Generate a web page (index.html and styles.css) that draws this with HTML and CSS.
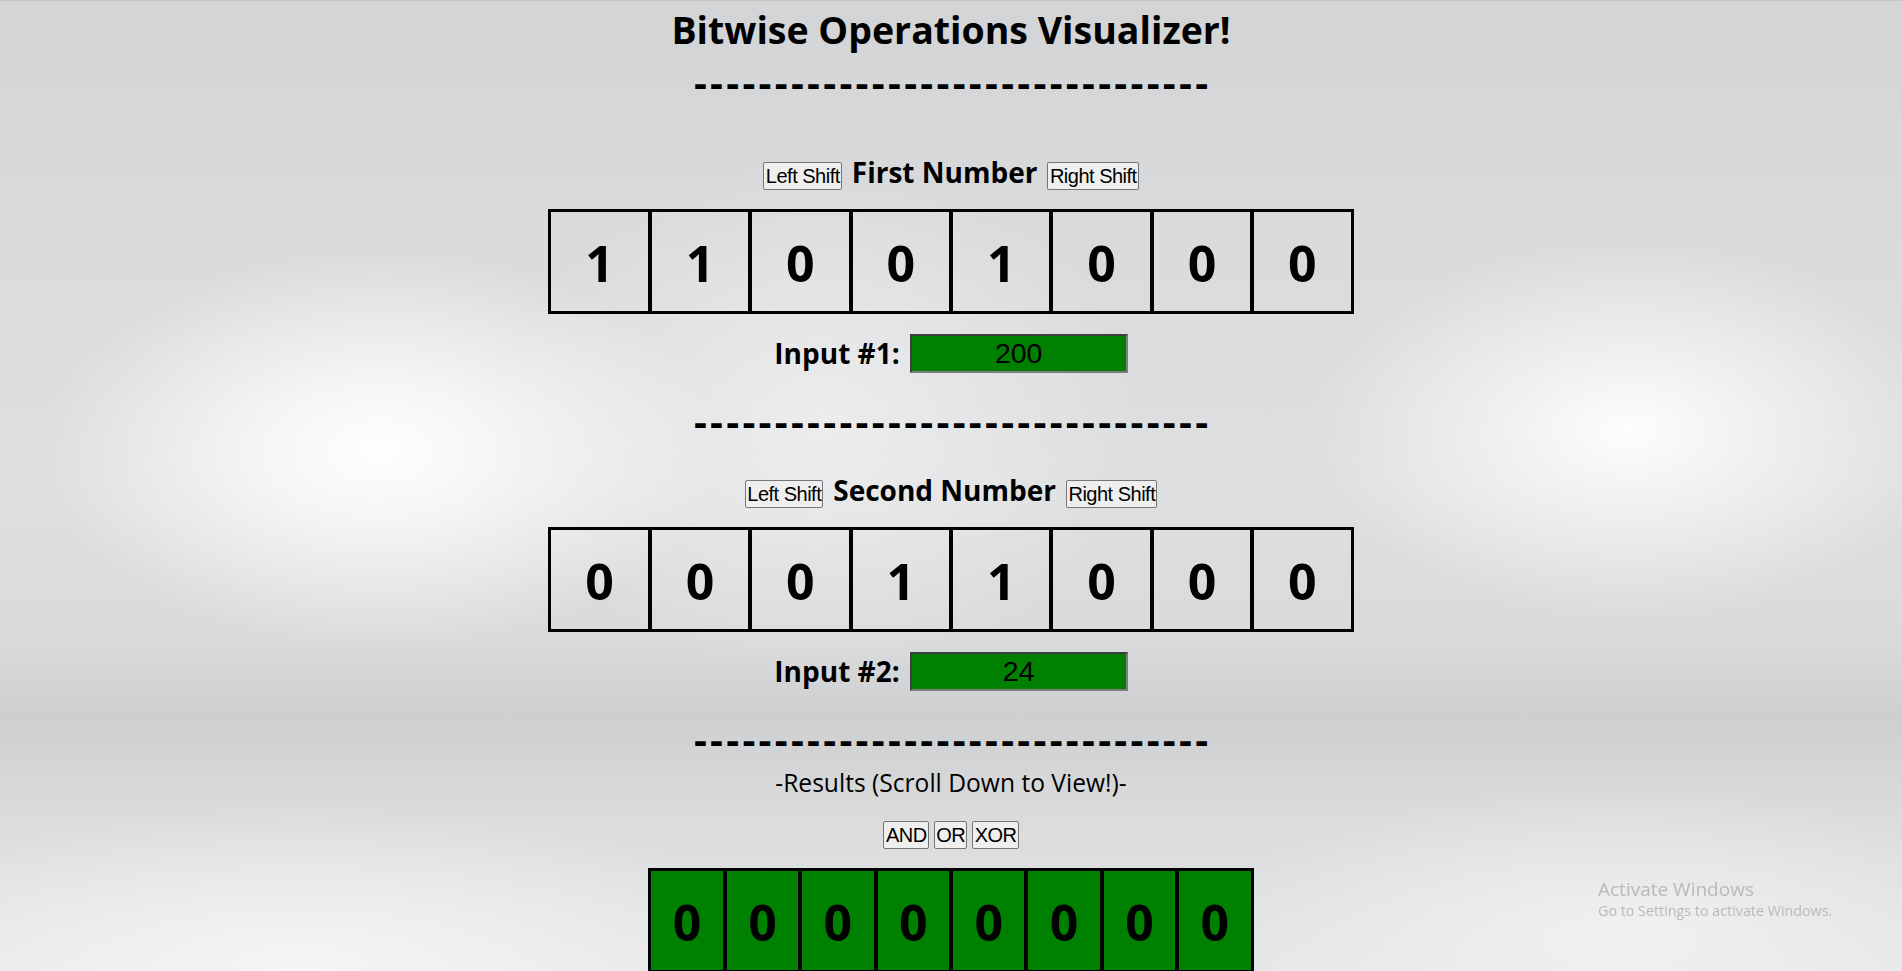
FILE: index.html
```html
<!DOCTYPE html>
<html lang="en">
<head>
<meta charset="utf-8">
<title>Bitwise Operations Visualizer</title>
<link rel="stylesheet" href="styles.css">
</head>
<body>
<main class="page">
  <h1 class="title">Bitwise Operations Visualizer!</h1>
  <div class="divider divider-first">--------------------------------</div>

  <section class="number number-first">
    <div class="number-head">
      <button class="btn" type="button">Left Shift</button>
      <h2 class="number-title">First Number</h2>
      <button class="btn" type="button">Right Shift</button>
    </div>
    <div class="bits">
      <div class="bit">1</div><div class="bit">1</div><div class="bit">0</div><div class="bit">0</div><div class="bit">1</div><div class="bit">0</div><div class="bit">0</div><div class="bit">0</div>
    </div>
    <div class="input-row">
      <label class="input-label" for="num1">Input #1:</label>
      <input class="num-input" id="num1" type="text" value="200">
    </div>
  </section>

  <div class="divider">--------------------------------</div>

  <section class="number">
    <div class="number-head">
      <button class="btn" type="button">Left Shift</button>
      <h2 class="number-title">Second Number</h2>
      <button class="btn" type="button">Right Shift</button>
    </div>
    <div class="bits">
      <div class="bit">0</div><div class="bit">0</div><div class="bit">0</div><div class="bit">1</div><div class="bit">1</div><div class="bit">0</div><div class="bit">0</div><div class="bit">0</div>
    </div>
    <div class="input-row">
      <label class="input-label" for="num2">Input #2:</label>
      <input class="num-input" id="num2" type="text" value="24">
    </div>
  </section>

  <div class="divider">--------------------------------</div>

  <div class="results-label">-Results (Scroll Down to View!)-</div>
  <div class="ops">
    <button class="btn" type="button">AND</button>
    <button class="btn" type="button">OR</button>
    <button class="btn" type="button">XOR</button>
  </div>
  <div class="bits bits-result">
    <div class="bit">0</div><div class="bit">0</div><div class="bit">0</div><div class="bit">0</div><div class="bit">0</div><div class="bit">0</div><div class="bit">0</div><div class="bit">0</div>
  </div>
</main>

<div class="watermark">
  <div class="wm-title">Activate Windows</div>
  <div class="wm-sub">Go to Settings to activate Windows.</div>
</div>
</body>
</html>
```
FILE: styles.css
```css
* {
  box-sizing: border-box;
}

html {
  height: 100%;
  scrollbar-width: none;
  background-color: #d9dadc;
  background-image:
    radial-gradient(ellipse 340px 200px at 380px 450px, rgba(255,255,255,0.98) 0%, rgba(255,255,255,0.7) 35%, rgba(255,255,255,0) 100%),
    radial-gradient(ellipse 320px 190px at 1630px 430px, rgba(255,255,255,0.95) 0%, rgba(255,255,255,0.6) 35%, rgba(255,255,255,0) 100%),
    radial-gradient(ellipse 320px 260px at 820px 420px, rgba(255,255,255,0.45) 0%, rgba(255,255,255,0) 100%),
    radial-gradient(ellipse 520px 160px at 300px 965px, rgba(246,246,247,0.95) 0%, rgba(246,246,247,0) 100%),
    radial-gradient(ellipse 420px 150px at 1620px 935px, rgba(242,242,243,0.9) 0%, rgba(242,242,243,0) 100%),
    linear-gradient(to bottom, #d3d4d6 0%, #d9dadc 22%, #dedfe1 50%, #d9dadc 66%, #cecfd1 74%, #dadbdd 84%, #e5e6e7 100%);
  background-repeat: no-repeat;
}

body {
  margin: 0;
  border-top: 1px solid #c4c5c7;
  font-family: "Open Sans", "Noto Sans", sans-serif;
  color: #000;
}

.page {
  display: flex;
  flex-direction: column;
  align-items: center;
}

.title {
  margin: 0;
  font-size: 37.5px;
  font-weight: 700;
  line-height: 58px;
}

.divider {
  margin-top: 28px;
  padding-left: 3.3px;
  font-size: 40px;
  font-weight: 700;
  line-height: 40px;
  letter-spacing: 3.3px;
  white-space: nowrap;
}

.divider-first {
  margin-top: 2.7px;
}

.number {
  display: flex;
  flex-direction: column;
  align-items: center;
}

.number-first {
  padding-top: 21.1px;
}

.number-head {
  display: flex;
  align-items: baseline;
  gap: 10px;
  height: 40px;
  margin-top: 28.8px;
}

.number-title {
  margin: 0;
  font-size: 28px;
  font-weight: 700;
  line-height: 40px;
}

.btn {
  margin: 0;
  padding: 2px 1px 2px 1.5px;
  border: 1px solid #767676;
  border-radius: 2px;
  background: #efefef;
  color: #000;
  font-family: "Liberation Sans", Arial, sans-serif;
  font-size: 20px;
  letter-spacing: -0.5px;
  line-height: 22.6px;
}

.bits {
  display: flex;
  margin-top: 17.7px;
  border: 1.25px solid #000;
}

.bit {
  display: flex;
  align-items: center;
  justify-content: center;
  width: 100.4px;
  height: 102.9px;
  padding-top: 2px;
  border: 2.5px solid #000;
  font-size: 50px;
  font-weight: 700;
  line-height: 1;
}

.bits-result {
  margin-top: 19px;
}

.bits-result .bit {
  width: 75.4px;
  background: #008000;
}

.input-row {
  display: flex;
  align-items: center;
  gap: 10px;
  height: 38.3px;
  margin-top: 20.3px;
}

.input-label {
  margin-bottom: 2px;
  font-size: 28px;
  font-weight: 700;
  line-height: 38px;
}

.num-input {
  width: 218px;
  height: 38.3px;
  margin: 0;
  padding: 0;
  border: 2px solid;
  border-color: #3f3f3f #7d7d7d #7d7d7d #3f3f3f;
  background: #008000;
  color: #000;
  font-family: "Liberation Sans", Arial, sans-serif;
  font-size: 28.5px;
  text-align: center;
}

.results-label {
  margin-top: 9.5px;
  font-size: 24.6px;
  line-height: 30px;
}

.ops {
  display: flex;
  gap: 5px;
  margin-top: 22.4px;
}

.watermark {
  position: fixed;
  left: 1598px;
  top: 878px;
  color: #b8b9bb;
  font-family: "Open Sans", "Noto Sans", sans-serif;
}

.wm-title {
  font-size: 19px;
  line-height: 22px;
}

.wm-sub {
  font-size: 14.3px;
  line-height: 22px;
}
```
